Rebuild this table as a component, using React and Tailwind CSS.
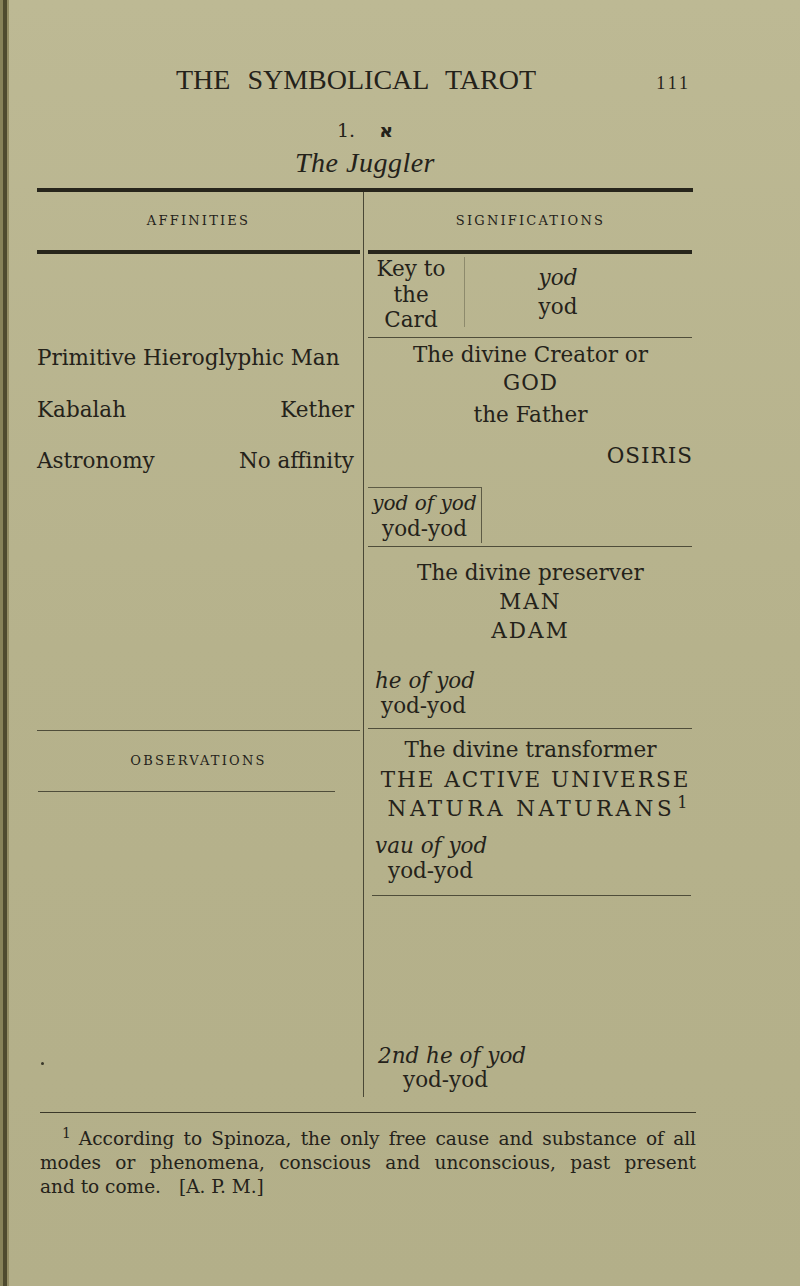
// Page 111 of "The Symbolical Tarot": table for card 1, The Juggler
import React from 'react';

const Rule = ({ className = '' }) => <div className={`h-px bg-[#4f4d3a] ${className}`} />;

const ThickRule = ({ className = '' }) => <div className={`h-[4px] bg-[#27251b] ${className}`} />;

const Heading = ({ children, className = '' }) => (
  <div className={`flex items-center justify-center text-[13px] tracking-[2.2px] ${className}`}>
    {children}
  </div>
);

const App = () => {
  return (
    <div className="flex min-h-[1286px] w-[800px] bg-linear-to-b from-[#bdb994] via-[#b6b28c] to-[#b3af89] font-['DejaVu_Serif',serif] text-[#24221a]">
      {/* binding edge of the scan */}
      <div className="w-[3px] bg-[#878259]" />
      <div className="w-[4px] bg-[#4f4b2f]" />
      <div className="w-[2px] bg-[#958f66]" />

      <main className="ml-[28px] w-[660px] pt-[62px]">
        {/* running head */}
        <div className="flex h-[36px] w-[656px] items-baseline font-['Liberation_Serif',serif] leading-[36px]">
          <span className="ml-[139px] text-[28px] [word-spacing:10px]">THE SYMBOLICAL TAROT</span>
          <span className="ml-auto mr-[2px] text-[18px] tracking-[3px]">111</span>
        </div>

        <div className="mt-[19px] flex h-[26px] w-[656px] items-baseline justify-center leading-[26px]">
          <span className="text-[19px]">1.</span>
          <span className="ml-[24px] font-['DejaVu_Sans',sans-serif] text-[19px] font-bold">א</span>
        </div>

        <div className="mt-[3px] h-[34px] w-[656px] text-center font-['Liberation_Serif',serif] text-[28px] italic leading-[34px] tracking-[0.5px]">
          The Juggler
        </div>

        <ThickRule className="mt-[8px] w-[656px]" />

        <div className="flex w-[656px]">
          {/* affinities */}
          <div className="w-[323px]">
            <Heading className="h-[58px]">AFFINITIES</Heading>
            <ThickRule />
            <div className="mt-[89px] h-[29px] text-[21.5px] leading-[29px]">Primitive Hieroglyphic Man</div>
            <div className="mt-[23px] flex h-[29px] justify-between pr-[6px] text-[21.5px] leading-[29px]">
              <span>Kabalah</span>
              <span>Kether</span>
            </div>
            <div className="mt-[22px] flex h-[29px] justify-between pr-[6px] text-[21.5px] leading-[29px]">
              <span>Astronomy</span>
              <span>No affinity</span>
            </div>
            <Rule className="mt-[255px]" />
            <Heading className="h-[60px]">OBSERVATIONS</Heading>
            <Rule className="ml-[1px] w-[297px]" />
            <div className="ml-[4px] mt-[270px] size-[3px] rounded-full bg-[#3a382a]" />
          </div>

          <div className="w-[8px] pl-[3px]">
            <div className="h-[905px] w-px bg-[#4a4836]" />
          </div>

          {/* significations */}
          <div className="w-[325px] text-[21.5px]">
            <Heading className="h-[58px]">SIGNIFICATIONS</Heading>
            <ThickRule className="w-[324px]" />

            <div className="flex h-[83px]">
              <div className="w-[96px] pr-[10px] pt-[2px] text-center leading-[25.5px]">
                Key to<br />the<br />Card
              </div>
              <div className="mt-[3px] h-[70px] w-px bg-[#8d8a6c]" />
              <div className="flex-1 pr-[42px] pt-[9px] text-center leading-[29px]">
                <div className="italic">yod</div>
                <div>yod</div>
              </div>
            </div>
            <Rule className="w-[324px]" />

            <div className="mt-[3px] h-[28px] text-center leading-[28px]">The divine Creator or</div>
            <div className="h-[28px] text-center leading-[28px] tracking-[1px]">GOD</div>
            <div className="mt-[4px] h-[28px] text-center leading-[28px]">the Father</div>
            <div className="mt-[13px] h-[28px] text-right leading-[28px] tracking-[1px]">OSIRIS</div>

            <div className="mt-[17px] h-[56px] w-[114px] border-r border-t border-[#5d5b45] pt-[3px] text-center leading-[25px]">
              <div className="text-[20px] italic">yod of yod</div>
              <div>yod-yod</div>
            </div>
            <Rule className="mt-[3px] w-[324px]" />

            <div className="mt-[12px] h-[28px] text-center leading-[28px]">The divine preserver</div>
            <div className="mt-[1px] h-[28px] text-center leading-[28px] tracking-[2px]">MAN</div>
            <div className="mt-[1px] h-[28px] text-center leading-[28px] tracking-[2px]">ADAM</div>
            <div className="mt-[23px] h-[25px] pl-[7px] italic leading-[25px]">he of yod</div>
            <div className="h-[25px] pl-[13px] leading-[25px]">yod-yod</div>
            <Rule className="mt-[10px] w-[324px]" />

            <div className="mt-[6px] h-[29px] text-center leading-[29px]">The divine transformer</div>
            <div className="mt-[1px] h-[29px] whitespace-nowrap pl-[10px] text-center leading-[29px] tracking-[2px]">
              THE ACTIVE UNIVERSE
            </div>
            <div className="h-[29px] whitespace-nowrap pl-[14px] text-center leading-[29px] tracking-[3.5px]">
              NATURA NATURANS<sup className="ml-[2px] tracking-normal">1</sup>
            </div>
            <div className="mt-[10px] h-[25px] pl-[7px] italic leading-[25px]">vau of yod</div>
            <div className="h-[25px] pl-[20px] leading-[25px]">yod-yod</div>
            <Rule className="ml-[4px] mt-[12px] w-[319px]" />

            <div className="mt-[148px] h-[24px] pl-[10px] italic leading-[24px]">2nd he of yod</div>
            <div className="h-[24px] pl-[35px] leading-[24px]">yod-yod</div>
          </div>
        </div>

        <div className="ml-[3px] mt-[15px] h-px w-[656px] bg-[#3a3829]" />

        {/* footnote */}
        <div className="ml-[3px] mt-[14px] w-[656px] text-[18.5px] leading-[24px]">
          <div className="whitespace-nowrap pl-[22px] text-justify [text-align-last:justify]">
            <sup className="mr-[8px]">1</sup>According to Spinoza, the only free cause and substance of all
          </div>
          <div className="whitespace-nowrap text-justify [text-align-last:justify]">
            modes or phenomena, conscious and unconscious, past present
          </div>
          <div>
            and to come.<span className="ml-[18px]">[A. P. M.]</span>
          </div>
        </div>
      </main>
    </div>
  );
};

export default App;
